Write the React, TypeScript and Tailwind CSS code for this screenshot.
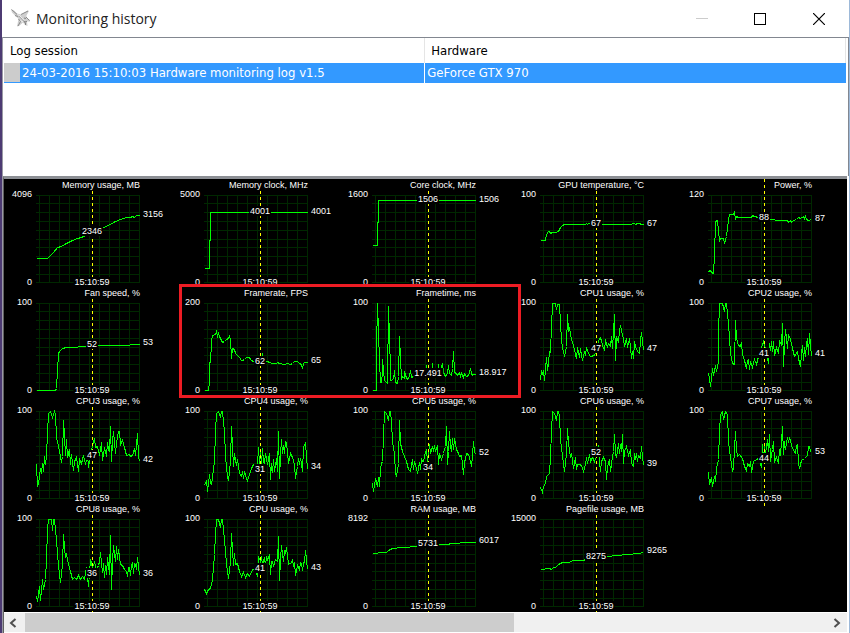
import React from "react";

interface IMonitor {
  title: string;
  max: string;
  // value under the cursor and its height in the plot
  mark: string;
  markY: number;
  // last value and its height in the plot
  last: string;
  lastY: number;
  points: string;
}

const cursorTime = "15:10:59";
const gridX = [3, 13, 23, 33, 43, 53, 63, 73, 83, 93, 103];
const gridY = [0, 8, 17, 26, 35, 44, 52, 61, 70, 79, 87];

const monitors: IMonitor[] = [
  {
    title: "Memory usage, MB", max: "4096", mark: "2346", markY: 36, last: "3156", lastY: 19,
    points: "0,63 11,63 14,60 17,57 21,52 25,51 30,48 36,45 41,43 45,42 55,37 67,32 72,30 79,26 84,24 90,22 94,22 96,21 98,22 100,20 103,20",
  },
  {
    title: "Memory clock, MHz", max: "5000", mark: "4001", markY: 16, last: "4001", lastY: 16,
    points: "0,73 5,73 5,45 6,45 6,17 103,17",
  },
  {
    title: "Core clock, MHz", max: "1600", mark: "1506", markY: 4, last: "1506", lastY: 4,
    points: "0,50 5,50 5,27 6,27 6,5 103,5",
  },
  {
    title: "GPU temperature, °C", max: "100", mark: "67", markY: 28, last: "67", lastY: 28,
    points: "0,45 5,45 6,39 8,36 9,36 10,38 12,37 15,37 18,36 20,32 22,30 24,29 45,29 46,28 47,29 48,28 60,29 91,29 92,28 94,28 95,29 97,28 99,28 101,29 103,29",
  },
  {
    title: "Power, %", max: "120", mark: "88", markY: 22, last: "87", lastY: 23,
    points: "0,76 2,75 3,77 5,78 6,60 7,26 9,25 10,35 11,46 12,43 15,43 16,48 18,41 19,33 20,25 21,19 25,19 26,17 27,24 28,21 30,22 43,22 44,20 46,21 50,22 63,24 70,25 79,25 80,27 82,25 83,27 85,25 88,24 90,22 92,23 95,21 96,23 97,21 98,24 100,25 103,24",
  },
  {
    title: "Fan speed, %", max: "100", mark: "52", markY: 41, last: "53", lastY: 39,
    points: "0,87 19,87 20,85 21,67 22,50 23,48 26,45 30,44 41,44 42,43 50,43 62,42 93,42 94,41 103,41",
  },
  {
    title: "Framerate, FPS", max: "200", mark: "62", markY: 58, last: "65", lastY: 57,
    points: "0,87 4,87 5,79 5,59 6,59 7,38 8,32 11,31 12,28 13,33 14,30 15,33 17,37 18,39 20,38 22,36 24,35 25,33 26,36 27,55 28,45 30,46 31,50 33,52 35,54 37,57 38,57 40,56 42,54 45,54 46,56 50,59 57,60 58,50 59,56 62,58 66,59 67,60 72,60 73,59 75,60 77,60 78,61 80,61 83,60 86,61 88,60 90,58 93,58 95,60 97,61 98,65 99,60 100,59 103,59",
  },
  {
    title: "Frametime, ms", max: "100", mark: "17.491", markY: 70, last: "18.917", lastY: 69,
    points: "0,87 4,87 4,46 5,0 6,28 7,58 8,79 9,79 10,68 10,56 11,67 12,77 14,79 15,80 16,3 17,35 18,66 18,77 21,76 22,67 23,79 25,80 26,73 27,33 28,55 29,76 30,73 32,75 32,68 33,72 35,76 37,73 38,67 39,74 41,73 53,73 54,62 55,73 59,73 60,60 61,72 65,73 66,61 67,70 70,60 71,69 73,73 75,70 76,62 77,70 79,72 80,65 81,48 82,69 84,70 85,72 87,69 88,73 89,70 91,74 92,70 94,73 96,72 98,65 99,70 100,72 101,71 103,71",
  },
  {
    title: "CPU1 usage, %", max: "100", mark: "47", markY: 45, last: "47", lastY: 45,
    points: "0,77 1,67 2,70 3,67 4,77 5,66 6,54 7,67 8,60 9,48 10,49 11,22 12,2 12,0 15,0 16,6 17,1 19,1 20,20 21,36 22,44 24,53 26,43 27,11 28,28 29,24 31,36 33,42 35,51 36,55 37,44 39,54 40,45 42,57 44,48 45,52 46,44 48,50 50,53 54,52 57,43 58,37 60,34 62,42 64,47 65,36 66,41 67,43 68,40 70,43 71,33 72,45 73,28 74,11 75,57 76,34 78,38 79,28 80,22 81,27 83,36 84,43 86,35 87,44 89,35 90,43 91,55 92,48 93,55 94,38 95,43 97,48 99,50 100,37 101,29 102,38 103,47",
  },
  {
    title: "CPU2 usage, %", max: "100", mark: "41", markY: 50, last: "41", lastY: 50,
    points: "0,70 1,75 2,83 4,65 5,72 7,62 8,68 10,58 10,30 11,0 14,0 16,8 17,0 18,0 20,20 22,50 24,60 26,61 27,17 28,35 30,42 32,43 33,39 34,51 36,57 38,65 39,57 40,56 41,66 42,58 44,64 46,56 48,61 50,53 55,38 57,46 60,60 61,40 62,47 63,38 64,48 65,38 66,52 68,44 70,50 71,37 73,42 74,20 75,63 76,40 77,26 78,35 79,45 80,31 82,36 84,45 86,53 89,48 90,55 92,63 93,50 94,42 95,57 96,44 97,53 98,40 99,35 100,51 101,30 103,53",
  },
  {
    title: "CPU3 usage, %", max: "100", mark: "47", markY: 44, last: "42", lastY: 48,
    points: "0,53 1,75 2,72 4,57 5,62 6,52 7,60 8,45 9,53 10,44 11,22 12,2 14,0 16,6 18,0 19,3 20,26 22,35 24,45 25,51 26,45 27,9 28,24 29,44 30,28 31,46 33,38 34,53 35,43 37,59 38,50 40,46 42,60 43,48 45,52 47,44 49,53 51,42 52,56 55,38 58,27 59,36 61,35 63,44 65,31 66,49 68,36 70,45 71,31 72,38 73,40 74,15 75,50 76,30 77,20 79,42 80,31 82,20 83,20 84,33 86,29 88,36 90,44 93,43 94,45 96,44 98,37 99,44 101,22 102,44 103,50",
  },
  {
    title: "CPU4 usage, %", max: "100", mark: "31", markY: 58, last: "34", lastY: 55,
    points: "0,74 2,69 3,80 5,63 6,72 7,73 9,58 10,50 11,20 12,2 14,0 16,6 17,0 18,0 20,20 21,45 23,65 24,69 26,50 27,15 28,35 29,55 30,42 32,54 33,48 35,62 37,65 38,60 39,67 40,60 42,67 43,69 45,63 47,57 49,53 53,53 54,36 55,52 56,41 57,53 58,37 59,50 60,52 61,42 63,53 65,42 66,68 67,52 68,61 69,48 70,60 72,47 73,60 74,20 75,67 76,44 77,28 78,42 79,34 80,42 81,30 82,31 84,52 86,42 88,46 90,53 91,67 93,55 94,47 95,53 96,47 97,52 98,60 99,36 101,31 102,45 103,58",
  },
  {
    title: "CPU5 usage, %", max: "100", mark: "34", markY: 56, last: "52", lastY: 41,
    points: "0,72 1,80 3,67 5,75 6,66 7,75 8,57 9,52 10,50 11,25 12,0 14,2 16,9 17,0 18,0 19,10 20,30 22,42 23,62 24,65 26,52 27,9 28,32 30,40 32,45 34,50 36,58 38,60 39,53 40,48 41,58 42,50 43,53 45,62 47,51 48,58 49,48 51,52 52,44 54,38 55,50 56,42 57,33 58,42 60,35 61,40 62,34 63,40 65,34 66,53 67,42 69,48 71,42 72,38 73,35 74,15 75,53 76,40 77,20 78,35 79,40 80,27 81,38 82,27 84,38 86,42 87,45 89,44 90,53 91,63 92,50 93,48 94,42 96,43 98,50 99,55 100,44 101,30 102,40 103,43",
  },
  {
    title: "CPU6 usage, %", max: "100", mark: "52", markY: 41, last: "39", lastY: 52,
    points: "0,76 2,81 3,75 5,72 6,65 9,62 10,45 11,20 12,0 14,2 16,9 17,0 18,0 19,5 20,28 22,45 24,60 26,42 27,17 28,32 30,46 31,42 33,57 35,46 36,58 37,53 39,53 41,54 43,60 45,53 46,46 47,52 49,43 50,50 52,46 54,50 56,45 58,34 59,50 60,60 61,50 63,46 65,50 66,68 67,55 69,48 70,60 72,45 73,40 74,23 75,42 76,46 78,32 79,42 80,33 81,40 82,23 83,52 84,40 86,35 88,44 90,38 91,52 93,55 94,42 95,48 96,42 97,50 98,44 100,47 101,35 102,45 103,54",
  },
  {
    title: "CPU7 usage, %", max: "100", mark: "44", markY: 47, last: "53", lastY: 40,
    points: "0,61 1,73 3,66 4,75 6,65 7,70 8,57 10,48 11,20 12,3 14,0 15,8 17,0 19,3 20,30 22,46 24,60 25,56 27,20 28,38 29,45 31,43 34,47 36,55 38,59 39,52 41,55 42,50 43,61 45,50 48,48 50,47 53,56 54,33 55,48 56,35 57,42 59,28 60,40 61,23 62,50 64,38 65,30 66,50 68,46 70,52 71,38 72,44 74,15 75,43 76,30 77,38 79,26 80,31 81,26 82,30 84,37 87,42 88,34 89,33 90,52 91,57 93,49 96,47 99,44 100,35 101,35 102,40 103,41",
  },
  {
    title: "CPU8 usage, %", max: "100", mark: "36", markY: 54, last: "36", lastY: 54,
    points: "0,77 1,82 3,67 4,81 6,60 7,70 9,60 10,40 11,10 12,0 15,0 16,11 17,0 18,0 20,20 21,35 23,55 24,63 26,45 27,15 28,28 29,38 30,35 32,45 34,52 36,60 38,58 40,60 42,56 44,60 46,57 48,60 50,48 52,67 54,40 56,48 58,43 60,50 62,46 63,42 64,33 66,53 67,44 68,58 69,46 70,55 71,38 73,55 74,16 75,70 76,42 77,26 79,42 80,27 81,40 82,30 84,45 86,46 88,50 90,52 91,57 92,48 93,48 94,56 95,46 96,43 97,54 98,44 99,45 100,50 101,38 103,56",
  },
  {
    title: "CPU usage, %", max: "100", mark: "41", markY: 49, last: "43", lastY: 48,
    points: "0,70 2,74 4,70 6,69 8,60 9,48 10,35 11,15 12,0 14,0 16,8 17,0 18,0 20,20 22,45 24,59 26,42 27,14 28,30 29,46 30,34 31,45 33,44 35,52 37,57 39,53 41,58 43,54 45,57 48,50 50,50 53,57 54,37 56,42 57,37 58,45 60,38 61,46 62,38 63,40 65,36 66,55 67,42 68,42 69,47 71,40 73,42 74,17 75,61 76,40 77,26 79,42 80,31 81,34 82,28 84,45 87,43 88,41 89,46 90,43 91,56 93,46 95,50 96,43 97,44 98,51 99,44 100,42 101,31 103,50",
  },
  {
    title: "RAM usage, MB", max: "8192", mark: "5731", markY: 24, last: "6017", lastY: 21,
    points: "0,34 5,34 6,33 14,33 16,31 20,29 30,28 45,27 67,25 76,25 78,24 87,24 88,23 103,23",
  },
  {
    title: "Pagefile usage, MB", max: "15000", mark: "8275", markY: 37, last: "9265", lastY: 31,
    points: "0,50 4,50 5,49 9,49 11,50 13,48 15,48 18,45 22,43 28,43 33,41 43,41 45,40 67,37 77,36 87,35 98,34 103,33",
  },
];

const Chart: React.FC<{ monitor: IMonitor }> = ({ monitor }) => {
  return (
    <section className="relative grid h-[108px] grid-cols-[32px_104px_32px] whitespace-nowrap">
      {/* axis limits */}
      <div className="flex flex-col items-end justify-between pt-[10px] pr-1">
        <span>{monitor.max}</span>
        <span>0</span>
      </div>

      <div className="relative">
        <svg width="104" height="108" viewBox="0 0 104 108" shapeRendering="crispEdges" fill="none" className="block overflow-visible">
          <g stroke="#002800">
            {gridX.map((x) => (
              <line key={x} x1={x + 0.5} x2={x + 0.5} y1={16} y2={104} />
            ))}
            {gridY.map((y) => (
              <line key={y} x1={0} x2={104} y1={y + 16.5} y2={y + 16.5} />
            ))}
          </g>
          <polyline points={monitor.points} stroke="#00ff00" transform="translate(0.5 16.5)" />
          <line x1={56.5} x2={56.5} y1={0} y2={111} stroke="#ffff00" strokeDasharray="3 3" />
        </svg>
        <h2 className="absolute top-0 right-0 bg-black py-px">{monitor.title}</h2>
        <span
          className="absolute left-[56px] -translate-x-1/2 -translate-y-1/2 bg-black px-px"
          style={{ top: monitor.markY + 16 }}
        >
          {monitor.mark}
        </span>
        <time className="absolute bottom-0 left-[56px] -translate-x-1/2 bg-black px-px">{cursorTime}</time>
      </div>

      <div className="relative">
        <span className="absolute left-[3px] -translate-y-1/2" style={{ top: monitor.lastY + 16 }}>
          {monitor.last}
        </span>
      </div>
    </section>
  );
};

const JetIcon = () => (
  <svg width="20" height="20" viewBox="0 0 20 20" aria-hidden="true">
    <path d="M0 0.5L3 1.5L6 4.5L10 5.5L17 1.5L18 2L15.5 6.5L15.5 9L19 11L19 12.5L16 12.5L16.5 17L14 16L12 13.5L8 17L6 17.5L7.5 10L4 6.5L1 3.5Z" fill="#cfcfcf" />
    <path d="M0.5 0.5L5 4.5L9.5 8.5L14.5 14M10 5.5L17 2M15 8L18.5 11.5M7.5 10L9.5 12.5L7 17M4 6.5L7 7.5" stroke="#8a8a8a" fill="none" />
    <path d="M6 5.5L9 7L13 11.5M9.5 11.5L12 13" stroke="#f2f2f2" fill="none" />
    <path d="M13 9L15 9.5M13 13L16 12.5M14.5 14V16" stroke="#707070" fill="none" strokeWidth="0.8" />
  </svg>
);

const App = () => {
  return (
    <div className="flex min-h-screen flex-col border-r border-l-2 border-r-[#9db9d9] border-l-[#4d3b73] bg-white font-['Liberation_Sans',sans-serif] text-black">
      <header className="flex h-[37px] items-center justify-between">
        <div className="flex items-center gap-[5px] pl-[9px]">
          <JetIcon />
          <h1 className="font-['Open_Sans',sans-serif] text-[14px] leading-5 text-[#222222]">Monitoring history</h1>
        </div>
        <div className="flex h-full">
          <button aria-label="Minimize" className="flex w-[58px] items-center justify-center">
            <svg width="12" height="12" shapeRendering="crispEdges">
              <path d="M0 5.5H12" stroke="#cccccc" />
            </svg>
          </button>
          <button aria-label="Maximize" className="flex w-[58px] items-center justify-center">
            <svg width="12" height="12" fill="none" shapeRendering="crispEdges">
              <path d="M0.5 0.5H11.5V11.5H0.5Z" stroke="#000000" />
            </svg>
          </button>
          <button aria-label="Close" className="flex w-[60px] items-center justify-center">
            <svg width="12" height="12" fill="none">
              <path d="M0 0L12 12M12 0L0 12" stroke="#000000" strokeWidth="1.2" />
            </svg>
          </button>
        </div>
      </header>

      <main className="flex flex-1 flex-col border-l border-l-[#9a9aa5]">
        <div className="h-[139px] border-t border-r border-[#828790] pr-[2px] pl-px">
          <table className="w-full table-fixed border-collapse font-['DejaVu_Sans_Condensed','DejaVu_Sans',sans-serif] text-[13px] leading-5">
            <thead>
              <tr className="h-[25px] text-left">
                <th className="w-1/2 border-r border-[#e5e5e5] pt-px pl-[6px] font-normal">Log session</th>
                <th className="border-r border-[#e5e5e5] pt-px pl-[6px] font-normal">Hardware</th>
              </tr>
            </thead>
            <tbody>
              <tr className="h-5 bg-[#3399ff] text-white">
                <td className="border-r border-white p-0">
                  <div className="flex h-5 gap-[2px]">
                    <span className="h-[19px] w-4 bg-[#cccccc]"></span>
                    24-03-2016 15:10:03 Hardware monitoring log v1.5
                  </div>
                </td>
                <td className="p-0 pl-[2px]">GeForce GTX 970</td>
              </tr>
            </tbody>
          </table>
        </div>

        <div className="mr-[2px] flex flex-1 flex-col border-t-[3px] border-l border-t-[#8c8f94] border-l-[#606060] bg-black">
          <div className="relative grid grid-cols-[repeat(5,168px)] overflow-hidden pb-px text-[9px] leading-[10px] text-white">
            {monitors.map((item) => (
              <Chart key={item.title} monitor={item} />
            ))}
            {/* highlight around framerate and frametime */}
            <div className="absolute top-[105px] left-[175px] h-[114px] w-[342px] border-[3px] border-[#ed1c24]"></div>
          </div>

          <div className="mt-auto flex h-[21px] border-y border-white bg-[#f0f0f0]">
            <button aria-label="Scroll left" className="flex w-[21px] items-center justify-center pr-[3px]">
              <svg width="8" height="10" fill="none">
                <path d="M6.5 1L2 5L6.5 9" stroke="#505050" strokeWidth="2" />
              </svg>
            </button>
            <div className="flex-1">
              <div className="h-full w-[61%] bg-[#cdcdcd]"></div>
            </div>
            <button aria-label="Scroll right" className="flex w-[21px] items-center justify-center">
              <svg width="8" height="10" fill="none">
                <path d="M1.5 1L6 5L1.5 9" stroke="#505050" strokeWidth="2" />
              </svg>
            </button>
          </div>
        </div>
      </main>
    </div>
  );
};

export default App;
